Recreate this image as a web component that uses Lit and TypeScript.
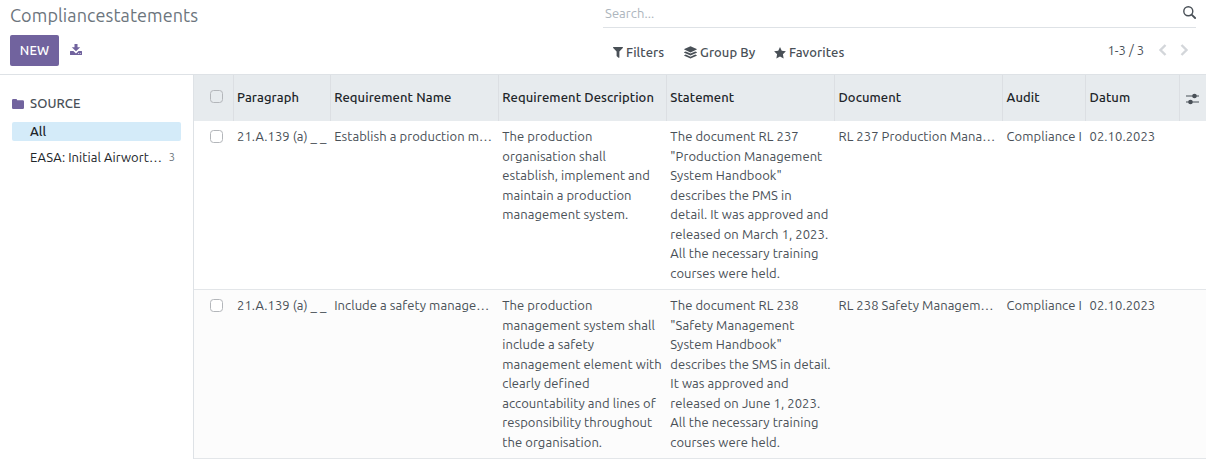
import { LitElement, html, css, svg } from "lit";
import { customElement } from "lit/decorators.js";

const headers = [
  "Paragraph", "Requirement Name", "Requirement Description", "Statement", "Document", "Audit", "Datum",
];

const rows: string[][][] = [
  [
    ["21.A.139 (a) _ _"],
    ["Establish a production m…"],
    ["The production", "organisation shall", "establish, implement and", "maintain a production", "management system."],
    ["The document RL 237", "\"Production Management", "System Handbook\"", "describes the PMS in",
     "detail. It was approved and", "released on March 1, 2023.", "All the necessary training", "courses were held."],
    ["RL 237 Production Mana…"],
    ["Compliance I"],
    ["02.10.2023"],
  ],
  [
    ["21.A.139 (a) _ _"],
    ["Include a safety manage…"],
    ["The production", "management system shall", "include a safety", "management element with",
     "clearly defined", "accountability and lines of", "responsibility throughout", "the organisation."],
    ["The document RL 238", "\"Safety Management", "System Handbook\"", "describes the SMS in detail.",
     "It was approved and", "released on June 1, 2023.", "All the necessary training", "courses were held."],
    ["RL 238 Safety Managem…"],
    ["Compliance I"],
    ["02.10.2023"],
  ],
];

const icon = (w: number, h: number, box: string, body: unknown) =>
  html`<svg class="icon" width=${w} height=${h} viewBox=${box}>${body}</svg>`;

const download = icon(12, 11, "0 0 12 11", svg`
  <path d="M4.500 0h3v3.300h2.700L6 7.300 1.800 3.300h2.700z"/>
  <path fill-rule="evenodd" d="M.5 7.100h2.900L6 9.400l2.600-2.300h2.900q.5 0 .5.5v2.900q0 .5-.5.5H.5q-.5 0-.5-.5V7.600q0-.5.5-.5zM8 9.300v.8h.9v-.8zm1.800 0v.8h.9v-.8z"/>`);
const folder = icon(12, 10, "0 0 12 10", svg`
  <path d="M1.300 0h2.600q1.300 0 1.300 1.300h5.500q1.300 0 1.300 1.300v6.100q0 1.300-1.300 1.300H1.300Q0 10 0 8.700V1.300Q0 0 1.300 0z"/>`);
const funnel = icon(10, 11, "0 0 10 11", svg`
  <path d="M.5 0h9q.8.1.3.9L6.400 4.400v6q-.2.7-.9.3L3.800 9.200q-.2-.2-.2-.5V4.400L.2.900Q-.3.100.5 0z"/>`);
const layers = icon(13, 13, "0 0 13 13", svg`
  <path d="M6.500.2 12.700 3q.5.300 0 .6L6.500 6.400.3 3.600q-.5-.3 0-.6z"/>
  <path d="m.3 6.100 1.500-.7 4.700 2.200 4.700-2.200 1.500.7q.5.300 0 .6L6.500 9.500.3 6.700q-.5-.3 0-.6z"/>
  <path d="m.3 9.200 1.500-.7 4.700 2.200 4.700-2.200 1.500.7q.5.300 0 .6l-6.200 2.800L.3 9.800q-.5-.3 0-.6z"/>`);
const star = icon(12, 12, "0 0 12 12", svg`
  <path d="m6 .1 1.750 3.700 4.150.55-3 2.850.75 4.300L6 9.500l-3.650 2 .75-4.300-3-2.850 4.150-.55z"/>`);
const magnifier = icon(13, 13, "0 0 13 13", svg`
  <circle cx="5.300" cy="5.300" r="4.500" fill="none" stroke="currentColor" stroke-width="1.400"/>
  <path d="m8.600 8.600 3.500 3.400" fill="none" stroke="currentColor" stroke-width="1.800" stroke-linecap="round"/>`);
const sliders = icon(13, 12, "0 0 13 12", svg`
  <path d="M0 2.500h13v1H0zM0 8.500h13v1H0z"/><circle cx="8.500" cy="3" r="2.300"/><circle cx="4.500" cy="9" r="2.300"/>`);
const chevron = (d: string) => icon(9, 12, "0 0 9 12", svg`
  <path d=${d} fill="none" stroke="currentColor" stroke-width="2.400"/>`);

@customElement("app-root")
class AppRoot extends LitElement {
  static styles = css`
    :host {
      display: flex; flex-direction: column; box-sizing: border-box;
      width: 1206px; height: 459px; overflow: hidden; background: #fff; color: #495057;
      font: 13px/19.5px "Ubuntu", "Noto Sans", "Open Sans", sans-serif; letter-spacing: .065px;
    }
    * { box-sizing: border-box; }
    .icon { display: block; flex: none; fill: currentColor; }
    .top { display: flex; height: 75px; border-bottom: 1px solid #dee2e6; flex: none; }
    .left { width: 603px; padding: 2px 0 0 10px; }
    .title { font-size: 18px; line-height: 27px; color: #6c757d; height: 33px; letter-spacing: .1px; }
    .actions { display: flex; align-items: center; gap: 11px; color: #71639e; }
    .actions .icon { margin-bottom: 2px; }
    .new {
      width: 49px; height: 31px; border: 0; border-radius: 2px; padding: 0; background: #71639e; color: #fff;
      font: 500 13px/31px "Ubuntu", "Noto Sans", sans-serif; text-align: center; letter-spacing: .1px;
    }
    .right { width: 593px; }
    .search {
      display: flex; justify-content: space-between; height: 28px; padding: 4px 0 0 2px;
      border-bottom: 1px solid #dee2e6; color: #adb5bd;
    }
    .search .icon { color: #495057; margin-top: 2px; }
    .tools { display: flex; align-items: center; height: 46px; padding: 3px 0 0 10px; font-weight: 500; letter-spacing: .1px; }
    .tool { display: flex; align-items: center; gap: 3px; }
    .tool.filters { width: 71px; }
    .tool.group { width: 90px; }
    .tool.fav { width: 333.500px; }
    .pager { display: flex; align-items: center; font-weight: 400; padding-bottom: 4px; letter-spacing: 0; }
    .range { width: 37px; white-space: nowrap; }
    .arrows { display: flex; gap: 13px; margin-left: 13px; margin-bottom: 1px; color: #d3d6da; }
    .main { display: flex; flex: 1; min-height: 0; }
    .side { width: 194px; flex: none; border-right: 1px solid #dee2e6; padding: 19px 12px 0; color: #212529; }
    .source { display: flex; align-items: center; gap: 6px; font-weight: 500; color: #495057; height: 20px; letter-spacing: .1px; }
    .source .icon { color: #71639e; }
    .item {
      display: flex; align-items: center; justify-content: space-between; height: 19px;
      padding: 0 6px 0 18px; white-space: nowrap;
    }
    .item.on { margin: 8px 0 7px; background: #d4ebf9; border-radius: 2px; font-weight: 500; }
    .count { font-size: 11px; color: #6c757d; }
    .table { flex: 1; }
    .row {
      display: grid; grid-template-columns: 39.600px 97.200px 168.100px 168.100px 168.100px 168.100px 83px 93.900px 1fr;
      height: 169px; padding-top: 6px; border-bottom: 1px solid #e3e6e9;
    }
    .row.alt { background: #fcfcfc; }
    .row.head { height: 46px; padding: 0; border: 0; background: #e7ebee; color: #212529; font-weight: 500; letter-spacing: .1px; }
    .head .cell { border-right: 1px solid #dcdfe3; line-height: 45px; }
    .head .cell:last-child { border: 0; }
    .cell { padding-left: 3.400px; overflow: hidden; white-space: nowrap; }
    .line { height: 19.500px; }
    .cell.pick { padding: 3px 0 0 16px; }
    .head .cell.pick { padding-top: 15px; }
    .box { width: 13px; height: 13px; border: 1px solid #b3b6ba; border-radius: 3.500px; background: #fff; }
    .head .box { background: transparent; }
    .head .adjust { padding: 18px 0 0 6px; color: #495057; }
  `;

  render() {
    return html`
      <header class="top">
        <div class="left">
          <div class="title">Compliancestatements</div>
          <div class="actions"><button class="new">NEW</button>${download}</div>
        </div>
        <div class="right">
          <div class="search"><span>Search...</span>${magnifier}</div>
          <div class="tools">
            <div class="tool filters">${funnel}<span>Filters</span></div>
            <div class="tool group">${layers}<span>Group By</span></div>
            <div class="tool fav">${star}<span>Favorites</span></div>
            <div class="pager">
              <span class="range">1-3 / 3</span>
              <div class="arrows">${chevron("M7.500 1 2.500 6l5 5")}${chevron("m1.500 1 5 5-5 5")}</div>
            </div>
          </div>
        </div>
      </header>
      <div class="main">
        <aside class="side">
          <div class="source">${folder}<span>SOURCE</span></div>
          <div class="item on"><span>All</span></div>
          <div class="item"><span>EASA: Initial Airwort…</span><span class="count">3</span></div>
        </aside>
        <div class="table">
          <div class="row head">
            <div class="cell pick"><div class="box"></div></div>
            ${headers.map((h) => html`<div class="cell">${h}</div>`)}
            <div class="cell adjust">${sliders}</div>
          </div>
          ${rows.map((cells, i) => html`
            <div class="row ${i % 2 ? "alt" : ""}">
              <div class="cell pick"><div class="box"></div></div>
              ${cells.map((lines) => html`<div class="cell">${lines.map((l) => html`<div class="line">${l}</div>`)}</div>`)}
            </div>`)}
        </div>
      </div>`;
  }
}
